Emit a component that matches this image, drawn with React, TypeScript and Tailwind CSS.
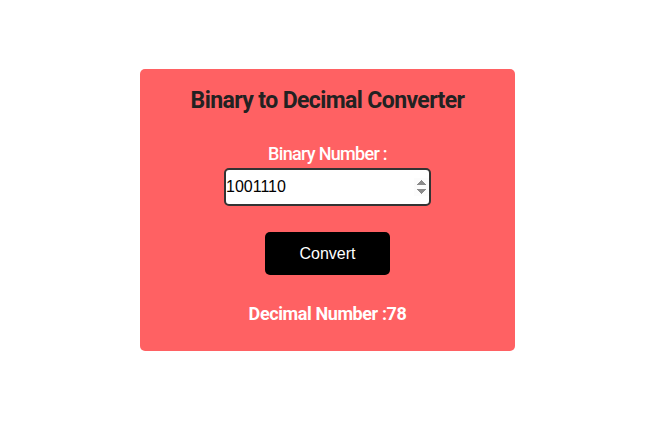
import React from "react";

export default function App() {
  return (
    <div className="min-h-[437px] w-full bg-white pt-[69px]" style={{ fontFamily: "Roboto, sans-serif" }}>
      <div className="ml-[140px] flex h-[282px] w-[375px] flex-col items-center rounded-[5px] bg-[#ff6163]">
        <h1 className="mt-[18px] text-[23px] font-bold leading-[28px] tracking-[-0.6px] text-[#222]">
          Binary to Decimal Converter
        </h1>
        <div className="mt-[29px] text-[18px] font-medium leading-[20px] tracking-[-0.7px] text-white">Binary Number :</div>
        <input
          type="number"
          defaultValue="1001110"
          autoFocus
          className="mt-[4px] h-[38px] w-[207px] rounded-[5px] border-2 border-[#333] bg-white px-0 text-[16px] text-black outline-none"
          style={{ fontFamily: "'Liberation Sans', Arial, sans-serif" }}
        />
        <button
          className="mt-[26px] h-[43px] w-[125px] rounded-[5px] bg-black text-[16px] text-white"
          style={{ fontFamily: "'Liberation Sans', Arial, sans-serif" }}
        >
          Convert
        </button>
        <div className="mt-[28px] text-[18px] font-bold leading-[22px] tracking-[-0.4px] text-white">Decimal Number :78</div>
      </div>
    </div>
  );
}
